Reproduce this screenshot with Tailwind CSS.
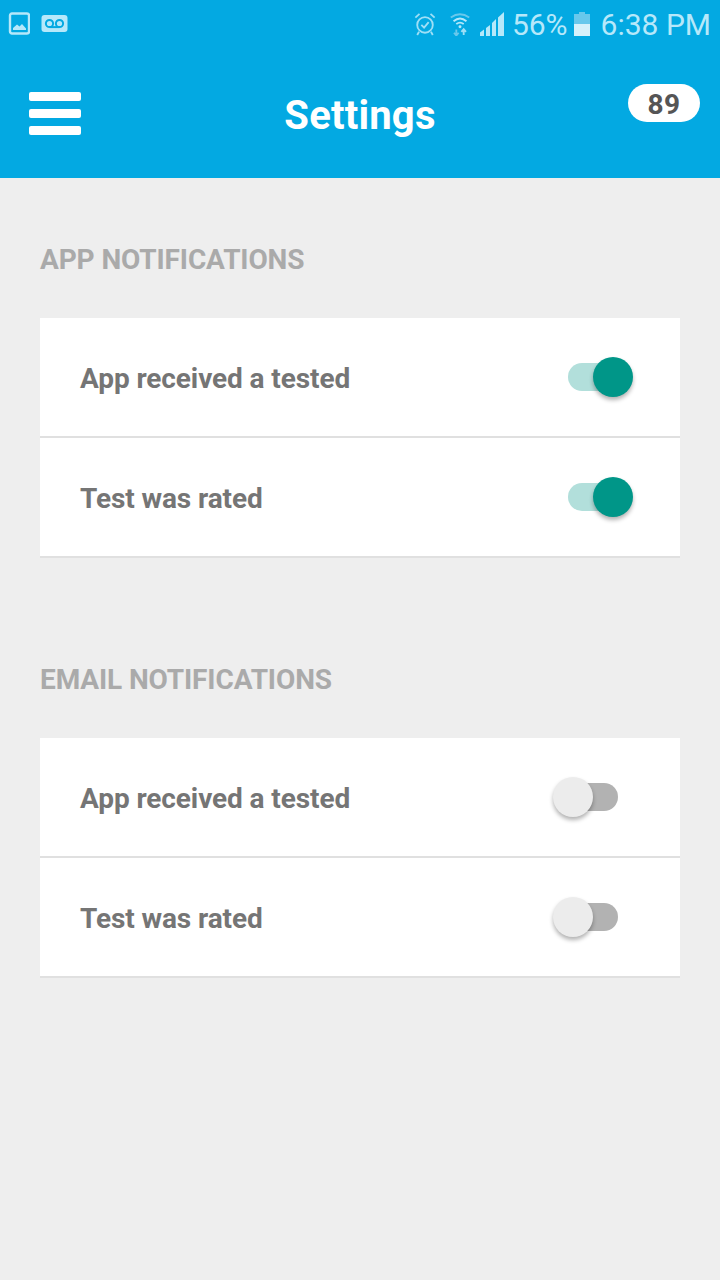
<!DOCTYPE html>
<html lang="en">
  <head>
    <meta charset="UTF-8" />
    <meta name="viewport" content="width=device-width, initial-scale=1.0" />
    <title>Settings</title>
    <script src="https://cdn.jsdelivr.net/npm/@tailwindcss/browser@4"></script>
  </head>
  <body class="bg-[#eeeeee] min-h-screen font-['Roboto',sans-serif] overflow-hidden">
    <header class="bg-[#03a9e2] h-[178px] flex flex-col">
      <!-- status bar -->
      <div class="h-[48px] flex items-center pl-[8px] pr-[9px] text-[#b6e8fa]">
        <svg width="22" height="24" viewBox="0 0 22 24" class="mr-[11px]">
          <rect x="2" y="1.500" width="19" height="20" rx="2" fill="none" stroke="#b6e8fa" stroke-width="2.400"/>
          <path d="M5 18 L5 16 L9 12.500 L11.500 14.500 L14 12 L18 16.500 L18 18 Z" fill="#b6e8fa"/>
        </svg>
        <svg width="27" height="20" viewBox="0 0 27 20">
          <rect x="0.500" y="1" width="26" height="17" rx="3" fill="#b6e8fa"/>
          <circle cx="8.500" cy="9.500" r="3.600" fill="none" stroke="#03a9e2" stroke-width="2"/>
          <circle cx="18.500" cy="9.500" r="3.600" fill="none" stroke="#03a9e2" stroke-width="2"/>
          <path d="M8.500 13.100 H18.500" stroke="#03a9e2" stroke-width="2"/>
        </svg>
        <div class="flex-1"></div>
        <svg width="22" height="24" viewBox="0 0 24 26" class="mr-[13px]" fill="none" stroke="#9fdff6" stroke-width="2">
          <circle cx="12" cy="14" r="8.500"/>
          <path d="M8 14 L11 17 L16 11"/>
          <path d="M1.500 6 L6 2 M22.500 6 L18 2 M5.500 21.500 L3.500 25 M18.500 21.500 L20.500 25"/>
        </svg>
        <svg width="22" height="24" viewBox="0 0 22 26" class="mr-[9px]" fill="none">
          <path d="M1 6 Q11 -1 21 6" stroke="#68c8ec" stroke-width="2"/>
          <path d="M4 10 Q11 4 18 10" stroke="#b6e8fa" stroke-width="2"/>
          <path d="M7 13 Q11 10 15 13" stroke="#b6e8fa" stroke-width="2"/>
          <circle cx="11" cy="16" r="1.600" fill="#b6e8fa"/>
          <path d="M7 19 V25 M4.500 22.500 L7 25.500 L9.500 22.500" stroke="#68c8ec" stroke-width="2"/>
          <path d="M15 25 V19 M12.500 21.500 L15 18.500 L17.500 21.500" stroke="#9fdff6" stroke-width="2"/>
        </svg>
        <svg width="24" height="24" viewBox="0 0 24 24" class="mr-[8px]" fill="#b6e8fa">
          <path d="M0 24 V20.500 L4 17.500 V24 Z"/>
          <path d="M6 24 V16 L10 13 V24 Z"/>
          <path d="M12 24 V11 L16 7 V24 Z" />
          <path d="M18 24 V5.500 L24 0 V24 Z"/>
        </svg>
        <span class="text-[30px] leading-none pt-[2px] mr-[6px]">56%</span>
        <svg width="16" height="24" viewBox="0 0 16 24" class="mr-[11px]">
          <rect x="5" y="0" width="6" height="3" fill="#68c8ec"/>
          <rect x="0" y="2" width="16" height="10" fill="#68c8ec"/>
          <rect x="0" y="12" width="16" height="12" fill="#d6f1fb"/>
        </svg>
        <span class="text-[30px] leading-none pt-[2px]">6:38 PM</span>
      </div>
      <!-- title bar -->
      <div class="flex-1 flex pl-[29px] pr-[20px]">
        <div class="w-[52px] flex flex-col gap-[8px] mt-[44px]">
          <div class="h-[9px] bg-white rounded-[2px]"></div>
          <div class="h-[9px] bg-white rounded-[2px]"></div>
          <div class="h-[9px] bg-white rounded-[2px]"></div>
        </div>
        <h1 class="flex-1 pl-[11px] text-center text-white font-bold text-[40px] leading-[42px] mt-[47px] tracking-[0.2px]">Settings</h1>
        <div class="w-[72px] h-[38px] mt-[36px] pt-[4px] bg-white rounded-full flex items-center justify-center text-[#555555] font-bold text-[28px] tracking-[0.5px]">89</div>
      </div>
    </header>

    <main class="px-[40px]">
      <section class="pt-[65px]">
        <h2 class="text-[28px] leading-[34px] font-bold text-[#aaaaaa] mb-[41px] tracking-[-0.12px]">APP NOTIFICATIONS</h2>
        <div class="bg-white">
          <div class="h-[120px] flex items-center justify-between pl-[40px] pr-[62px] border-b-2 border-[#e0e0e0]">
            <span class="mt-[4px] text-[28px] font-bold text-[#757575] tracking-[-0.1px]">App received a tested</span>
            <div class="relative w-[50px] h-[28px] rounded-full bg-[#b2dfdb]">
              <div class="absolute right-[-15px] top-[-6px] w-[40px] h-[40px] rounded-full bg-[#009688] shadow-[0_3px_4px_rgba(0,0,0,0.3)]"></div>
            </div>
          </div>
          <div class="h-[120px] flex items-center justify-between pl-[40px] pr-[62px] border-b-2 border-[#e0e0e0]">
            <span class="mt-[4px] text-[28px] font-bold text-[#757575] tracking-[-0.1px]">Test was rated</span>
            <div class="relative w-[50px] h-[28px] rounded-full bg-[#b2dfdb]">
              <div class="absolute right-[-15px] top-[-6px] w-[40px] h-[40px] rounded-full bg-[#009688] shadow-[0_3px_4px_rgba(0,0,0,0.3)]"></div>
            </div>
          </div>
        </div>
      </section>

      <section class="pt-[105px]">
        <h2 class="text-[28px] leading-[34px] font-bold text-[#aaaaaa] mb-[41px] tracking-[-0.12px]">EMAIL NOTIFICATIONS</h2>
        <div class="bg-white">
          <div class="h-[120px] flex items-center justify-between pl-[40px] pr-[62px] border-b-2 border-[#e0e0e0]">
            <span class="mt-[4px] text-[28px] font-bold text-[#757575] tracking-[-0.1px]">App received a tested</span>
            <div class="relative w-[50px] h-[28px] rounded-full bg-[#b2b2b2]">
              <div class="absolute left-[-15px] top-[-6px] w-[40px] h-[40px] rounded-full bg-[#ececec] shadow-[0_3px_4px_rgba(0,0,0,0.3)]"></div>
            </div>
          </div>
          <div class="h-[120px] flex items-center justify-between pl-[40px] pr-[62px] border-b-2 border-[#e0e0e0]">
            <span class="mt-[4px] text-[28px] font-bold text-[#757575] tracking-[-0.1px]">Test was rated</span>
            <div class="relative w-[50px] h-[28px] rounded-full bg-[#b2b2b2]">
              <div class="absolute left-[-15px] top-[-6px] w-[40px] h-[40px] rounded-full bg-[#ececec] shadow-[0_3px_4px_rgba(0,0,0,0.3)]"></div>
            </div>
          </div>
        </div>
      </section>
    </main>
  </body>
</html>
